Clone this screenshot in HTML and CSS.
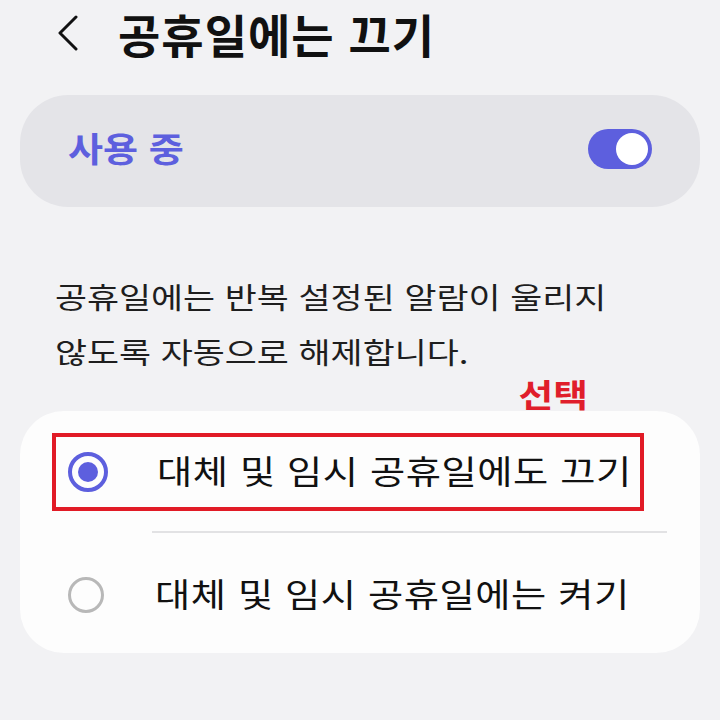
FILE: index.html
```html
<!DOCTYPE html>
<html lang="ko">
<head>
<meta charset="utf-8">
<link rel="stylesheet" href="styles.css">
</head>
<body>
<div class="page">
  <header class="header">
    <svg class="back" width="24" height="36" viewBox="0 0 24 36"><path d="M20 2 L4 18 L20 34" fill="none" stroke="#111" stroke-width="3" stroke-linecap="round" stroke-linejoin="round"/></svg>
    <h1 class="title">공휴일에는 끄기</h1>
  </header>
  <section class="master">
    <span class="master-label">사용 중</span>
    <span class="switch"><span class="thumb"></span></span>
  </section>
  <p class="desc"><span class="wide">공휴일에는 반복 설정된 알람이 울리지</span><br><span class="wide">않도록 자동으로 해제합니다.</span></p>
  <div class="note-row"><span class="note">선택</span></div>
  <section class="card">
    <div class="option highlighted">
      <span class="radio on"><span class="dot"></span></span>
      <span class="opt-text">대체 및 임시 공휴일에도 끄기</span>
    </div>
    <div class="divider"></div>
    <div class="option">
      <span class="radio"></span>
      <span class="opt-text">대체 및 임시 공휴일에는 켜기</span>
    </div>
  </section>
</div>
</body>
</html>
```

FILE: styles.css
```css
html, body {
  margin: 0;
  padding: 0;
  background: #f2f2f4;
}
body {
  font-family: "Noto Sans CJK KR", "Noto Sans", sans-serif;
  color: #111;
  width: 720px;
  height: 720px;
  overflow: hidden;
}
.page {
  padding: 0 20px;
}
.header {
  display: flex;
  align-items: center;
  height: 67px;
  padding-left: 36px;
}
.back {
  display: block;
  flex: none;
  margin-top: -2px;
}
.title {
  margin: 0 0 0 38px;
  flex: none;
  white-space: nowrap;
  font-size: 46px;
  font-weight: 700;
  letter-spacing: 1px;
  line-height: 1.45;
}
.master {
  margin-top: 28px;
  height: 112px;
  background: #e4e4e8;
  border-radius: 48px;
  display: flex;
  align-items: center;
  justify-content: space-between;
  padding: 0 48px;
}
.master-label {
  color: #5d5fde;
  font-size: 34px;
  font-weight: 700;
  margin-top: -8px;
  display: inline-block;
  transform: scaleX(1.12);
  transform-origin: left center;
}
.switch {
  width: 64px;
  height: 40px;
  border-radius: 20px;
  background: #5d5fde;
  position: relative;
  margin-top: -4px;
}
.thumb {
  position: absolute;
  right: 4px;
  top: 4px;
  width: 32px;
  height: 32px;
  border-radius: 50%;
  background: #fff;
}
.desc {
  margin: 62px 0 0 35px;
  font-size: 29px;
  line-height: 55px;
  color: #1e1e1e;
}
.wide {
  display: inline-block;
  transform: scaleX(1.2);
  transform-origin: left center;
}
.note-row {
  display: flex;
  justify-content: flex-end;
  padding-right: 112px;
  height: 14px;
  position: relative;
  z-index: 2;
}
.note {
  color: #e01e2b;
  font-size: 32px;
  font-weight: 700;
  line-height: 1;
  margin-top: -2px;
  display: inline-block;
  transform: scaleX(1.18);
  transform-origin: right center;
}
.card {
  margin-top: 18px;
  background: #fdfdfd;
  border-radius: 44px;
  padding: 22px 0 16px 0;
}
.option {
  display: flex;
  align-items: center;
  height: 78px;
  padding-left: 48px;
  box-sizing: border-box;
}
.option.highlighted {
  margin: 0 56px 0 32px;
  border: 4px solid #e11b26;
  padding-left: 12px;
}
.radio {
  width: 36px;
  height: 36px;
  border-radius: 50%;
  border: 3px solid #b8b8b8;
  box-sizing: border-box;
  display: flex;
  align-items: center;
  justify-content: center;
  flex: none;
}
.radio.on {
  width: 40px;
  height: 40px;
  border: 4px solid #5d5fde;
}
.dot {
  width: 20px;
  height: 20px;
  border-radius: 50%;
  background: #5d5fde;
}
.opt-text {
  font-size: 33px;
  margin-left: 51px;
  letter-spacing: 0.5px;
  margin-top: -4px;
  display: inline-block;
  white-space: nowrap;
  transform: scaleX(1.16);
  transform-origin: left center;
}
.option.highlighted .opt-text {
  margin-left: 49px;
}
.divider {
  height: 2px;
  background: #e2e2e4;
  margin: 20px 33px 20px 132px;
}
.card .option:last-child {
  height: 84px;
}
```
